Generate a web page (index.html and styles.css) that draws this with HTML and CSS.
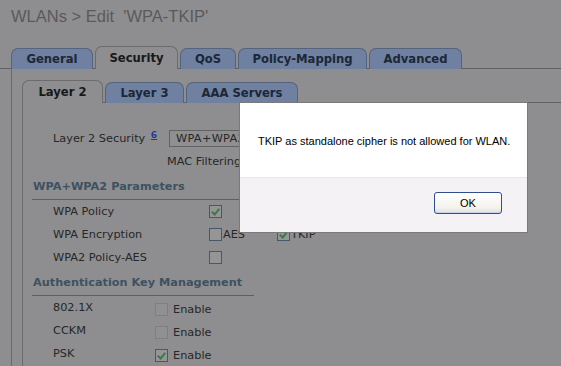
FILE: index.html
```html
<!DOCTYPE html>
<html lang="en">
  <head>
    <meta charset="UTF-8" />
    <title>WLANs &gt; Edit</title>
    <link rel="stylesheet" href="styles.css">
  </head>

  <body>
    <h1 class="page-title">WLANs &gt; Edit &nbsp;'WPA-TKIP'</h1>

    <div class="tabs main-tabs">
      <span class="tab w-general">General</span>
      <span class="tab w-security active">Security</span>
      <span class="tab w-qos">QoS</span>
      <span class="tab w-policy">Policy-Mapping</span>
      <span class="tab w-advanced">Advanced</span>
    </div>

    <div class="panel">
      <div class="tabs sub-tabs">
        <span class="tab w-layer2 active">Layer 2</span>
        <span class="tab w-layer3">Layer 3</span>
        <span class="tab w-aaa">AAA Servers</span>
      </div>

      <div class="subpanel">
        <div class="security-row">
          <span class="security-label">Layer 2 Security <a class="help" href="#">6</a></span>
          <span class="select">WPA+WPA2</span>
        </div>
        <div class="mac-row">MAC Filtering</div>

        <h2 class="section-head">WPA+WPA2 Parameters</h2>
        <div class="row">
          <span class="label">WPA Policy</span>
          <span class="cb checked"></span>
        </div>
        <div class="row">
          <span class="label">WPA Encryption</span>
          <span class="cb"></span><span class="cb-text">AES</span>
          <span class="cb checked tkip"></span><span class="cb-text">TKIP</span>
        </div>
        <div class="row">
          <span class="label">WPA2 Policy-AES</span>
          <span class="cb"></span>
        </div>

        <h2 class="section-head akm">Authentication Key Management</h2>
        <div class="row">
          <span class="label short">802.1X</span>
          <span class="enable"><span class="cb disabled"></span>Enable</span>
        </div>
        <div class="row">
          <span class="label short">CCKM</span>
          <span class="enable"><span class="cb disabled"></span>Enable</span>
        </div>
        <div class="row">
          <span class="label short">PSK</span>
          <span class="enable"><span class="cb checked"></span>Enable</span>
        </div>
      </div>
    </div>

    <div class="dialog">
      <div class="dialog-body">TKIP as standalone cipher is not allowed for WLAN.</div>
      <div class="dialog-foot">
        <button class="ok-btn">OK</button>
      </div>
    </div>
  </body>
</html>
```

FILE: styles.css
```css
* {
  box-sizing: border-box;
  margin: 0;
  padding: 0;
}

body {
  width: 561px;
  height: 366px;
  overflow: hidden;
  background-color: #8e8e90;
  font-family: "DejaVu Sans", Verdana, sans-serif;
  font-size: 11.3px;
  color: #272727;
}

.page-title {
  margin: 7px 0 0 11px;
  height: 18px;
  line-height: 18px;
  font-family: "Liberation Sans", Arial, sans-serif;
  font-size: 16.5px;
  font-weight: normal;
  color: #5a5a5a;
}

/* tab strips */
.tabs {
  display: flex;
  align-items: flex-end;
  gap: 2px;
  border-bottom: 1px solid #626262;
}

.main-tabs {
  margin-top: 21px;
  padding-left: 11px;
}

.sub-tabs {
  margin-top: 11px;
}

.tab {
  height: 21px;
  margin-bottom: -1px;
  line-height: 20px;
  text-align: center;
  font-size: 11.6px;
  font-weight: bold;
  color: #1b2737;
  background-color: #6f80a0;
  border: 1px solid #56637c;
  border-bottom: none;
  border-radius: 7px 7px 0 0;
}

.tab.active {
  height: 23px;
  line-height: 22px;
  color: #181818;
  background-color: #8e8e90;
  border-color: #6c6c6c;
}

.w-general { width: 82px; }
.w-security { width: 83px; }
.w-qos { width: 56px; }
.w-policy { width: 129px; }
.w-advanced { width: 93px; }
.w-layer2 { width: 81px; }
.w-layer3 { width: 79px; }
.w-aaa { width: 112px; }

/* panels */
.panel {
  display: flex;
  flex-direction: column;
  margin-left: 11px;
  padding-left: 10px;
  height: 297px;
  border-left: 1px solid #6a6a6a;
}

.subpanel {
  flex: 1;
  overflow: hidden;
  border-left: 1px solid #6a6a6a;
}

.security-row {
  display: flex;
  align-items: center;
  height: 18px;
  margin-top: 26px;
  padding-left: 30px;
}

.security-label {
  width: 116px;
}

.help {
  position: relative;
  top: -4px;
  margin-left: 2px;
  font-size: 9px;
  font-weight: bold;
  color: #26389e;
}

.select {
  width: 110px;
  height: 17px;
  line-height: 15px;
  padding-left: 6px;
  border: 1px solid #626262;
  background-color: #8f8f91;
  letter-spacing: 0.3px;
}

.mac-row {
  height: 18px;
  line-height: 18px;
  margin-top: 6px;
  padding-left: 144px;
}

.section-head {
  width: 222px;
  height: 22px;
  margin: 7px 0 0 9px;
  padding: 0 0 3px 1px;
  line-height: 18px;
  font-size: 11.3px;
  font-weight: bold;
  color: #3e5160;
  border-bottom: 1px solid #5e5e5e;
}

.section-head.akm {
  margin-top: 5px;
}

.row {
  display: flex;
  align-items: center;
  height: 23px;
  padding-left: 30px;
}

.label {
  width: 156px;
}

.label.short {
  width: 102px;
}

/* checkboxes */
.cb {
  position: relative;
  width: 13px;
  height: 13px;
  border: 1px solid #47586a;
  background-color: #959597;
  flex-shrink: 0;
}

.cb.checked::after {
  content: "";
  position: absolute;
  left: 3px;
  top: 1px;
  width: 3px;
  height: 6px;
  border: solid #3c7a44;
  border-width: 0 2px 2px 0;
  transform: rotate(40deg);
}

.cb.disabled {
  border-color: #7f7f81;
  background-color: #909092;
}

.cb-text {
  margin-left: 1px;
}

.cb.tkip {
  margin-left: 32px;
}

.enable {
  display: flex;
  align-items: center;
  gap: 5px;
  padding-top: 4px;
}

/* alert dialog */
.dialog {
  position: absolute;
  left: 239px;
  top: 102px;
  width: 289px;
  height: 131px;
  border: 1px solid #7a7a7a;
  background-color: #f4f2f4;
  font-family: "Liberation Sans", Arial, sans-serif;
  font-size: 11px;
  color: #000;
}

.dialog-body {
  height: 75px;
  padding: 32px 0 0 18px;
  background-color: #fff;
  border-bottom: 1px solid #e8e6e8;
}

.dialog-foot {
  display: flex;
  justify-content: flex-end;
  padding: 14px 25px 0 0;
}

.ok-btn {
  width: 68px;
  height: 22px;
  font-family: "Liberation Sans", Arial, sans-serif;
  font-size: 11px;
  color: #000;
  background: linear-gradient(#ffffff, #f4f3ee 70%, #e3e1da);
  border: 1px solid #2f4f8c;
  border-radius: 3px;
  box-shadow: inset 0 -1px 0 #c7d3ee, inset 0 1px 0 #fff;
}
```
